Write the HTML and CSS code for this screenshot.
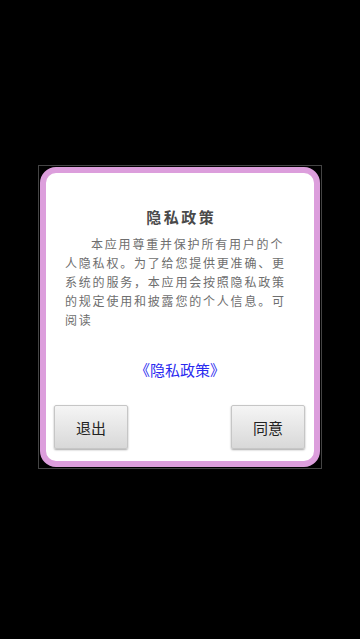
FILE: index.html
```html
<!DOCTYPE html>
<html lang="zh-CN">
<head>
    <meta charset="UTF-8">
    <meta name="viewport" content="width=device-width, initial-scale=1.0">
    <title>隐私政策</title>
    <link rel="stylesheet" href="styles.css">
</head>
<body>
    <div class="frame">
        <div class="dialog">
            <h3 class="title">隐私政策</h3>
            <p class="content">本应用尊重并保护所有用户的个人隐私权。为了给您提供更准确、更系统的服务，本应用会按照隐私政策的规定使用和披露您的个人信息。可阅读</p>
            <a class="policy-link" href="#">《隐私政策》</a>
            <div class="buttons">
                <button>退出</button>
                <button>同意</button>
            </div>
        </div>
    </div>
</body>
</html>
```

FILE: styles.css
```css
body {
    margin: 0;
    padding-top: 165px;
    background: #000;
    font-family: "Noto Sans CJK SC", "Noto Sans", sans-serif;
    height: 639px;
    box-sizing: border-box;
}

.frame {
    width: 280px;
    margin: 0 auto;
    padding: 1px;
    border: 1px solid #444;
    background: #000;
}

.dialog {
    width: 280px;
    height: 300px;
    box-sizing: border-box;
    border: 6px solid #dc9edc;
    border-radius: 16px;
    background: #fff;
    display: flex;
    flex-direction: column;
    padding-top: 33px;
}

.title {
    margin: 0;
    font-size: 15px;
    line-height: 22px;
    font-weight: bold;
    color: #4a4a4a;
    text-align: center;
    letter-spacing: 2.5px;
    padding-left: 2.5px;
}

.content {
    margin: 6px 0 0 19px;
    width: 222px;
    font-size: 12px;
    line-height: 19px;
    letter-spacing: 1.8px;
    text-indent: 26px;
    color: #6e6e6e;
}

.policy-link {
    margin-top: 30px;
    font-size: 15px;
    line-height: 22px;
    color: #2a2af0;
    text-align: center;
    text-decoration: none;
}

.buttons {
    display: flex;
    justify-content: space-between;
    margin-top: 24px;
    padding: 0 9px 0 8px;
}

button {
    width: 74px;
    height: 44px;
    border: 1px solid #c6c6c6;
    border-radius: 2px;
    background: linear-gradient(#f5f5f5, #d8d8d8);
    box-shadow: 0 1px 2px rgba(0, 0, 0, 0.35);
    font-family: inherit;
    font-size: 15px;
    color: #222;
    padding: 0;
}
```
